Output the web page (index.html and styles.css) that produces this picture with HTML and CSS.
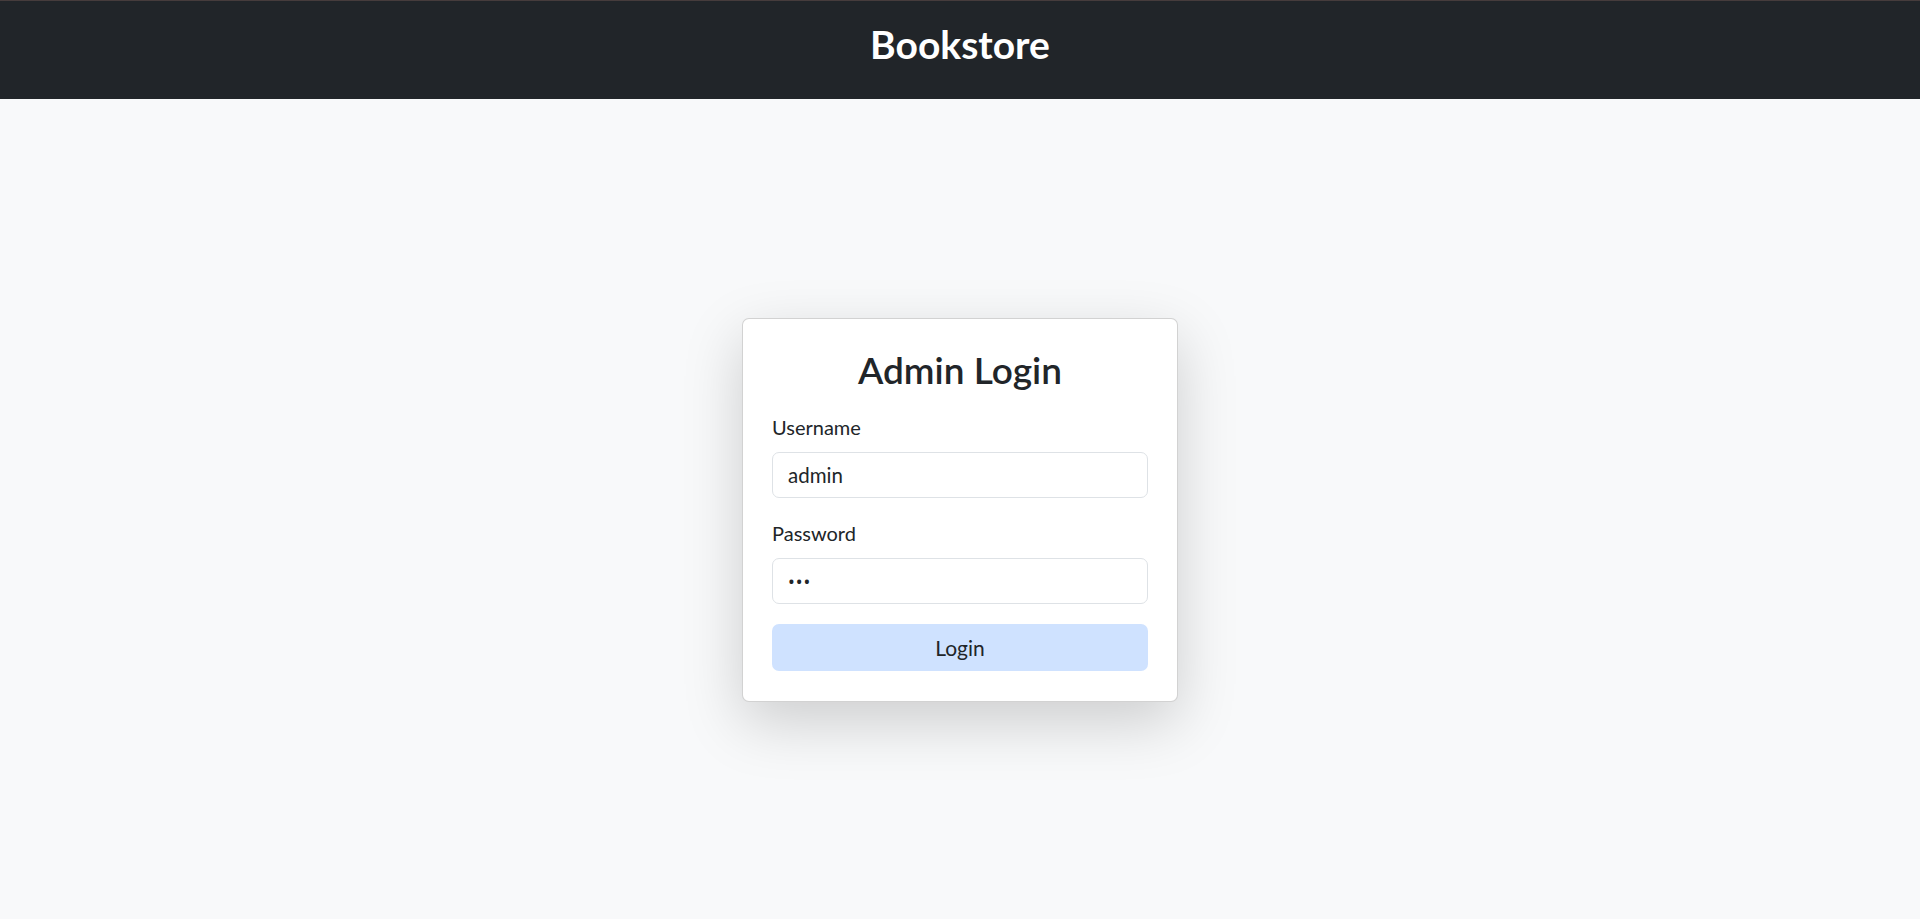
FILE: index.html
```html
<!DOCTYPE html>
<html lang="en">
<head>
<meta charset="utf-8">
<title>Bookstore - Admin Login</title>
<link rel="stylesheet" href="styles.css">
</head>
<body>
<header class="topbar">
  <h1 class="brand">Bookstore</h1>
</header>
<main class="main">
  <form class="card" onsubmit="return false">
    <h2 class="card-title">Admin Login</h2>
    <div class="field">
      <label class="label" for="username">Username</label>
      <input class="input" id="username" type="text" value="admin">
    </div>
    <div class="field">
      <label class="label" for="password">Password</label>
      <input class="input input-password" id="password" type="password" value="abc">
    </div>
    <button class="btn" type="submit">Login</button>
  </form>
</main>
</body>
</html>
```
FILE: styles.css
```css
* { box-sizing: border-box; }
html, body { margin: 0; padding: 0; }
body {
  background: #f8f9fa;
  color: #212529;
  font-family: "Lato", "Noto Sans", sans-serif;
  font-size: 20px;
  line-height: 1.5;
}
.topbar {
  height: 99px;
  background: #212529;
  border-top: 1px solid #463c3c;
  padding-bottom: 12px;
  display: flex;
  align-items: center;
  justify-content: center;
}
.brand {
  margin: 0;
  color: #fff;
  font-size: 39px;
  font-weight: 700;
  line-height: 48px;
}
.main {
  min-height: calc(100vh - 99px);
  padding-top: 2px;
  display: flex;
  align-items: center;
  justify-content: center;
}
.card {
  width: 436px;
  background: #fff;
  border: 1px solid rgba(0, 0, 0, 0.175);
  border-radius: 7px;
  padding: 27px 29px 30px;
  box-shadow: 0 20px 60px rgba(0, 0, 0, 0.175);
  display: flex;
  flex-direction: column;
}
.card-title {
  margin: 0 0 18px;
  text-align: center;
  font-size: 37px;
  font-weight: 600;
  line-height: 48px;
}
.field {
  display: flex;
  flex-direction: column;
  margin-bottom: 20px;
}
.label {
  line-height: 30px;
  margin-bottom: 10px;
}
.input {
  height: 46px;
  border: 1px solid #dee2e6;
  border-radius: 7px;
  padding: 0 15px;
  font: inherit;
  font-size: 20.5px;
  color: #212529;
  background: #fff;
}
.input-password {
  font-family: "Noto Sans", sans-serif;
  font-size: 18px;
  letter-spacing: 1px;
}
.btn {
  height: 47px;
  border: 0;
  border-radius: 7px;
  background: #cfe2ff;
  color: #212529;
  font: inherit;
  font-size: 21px;
}
```
